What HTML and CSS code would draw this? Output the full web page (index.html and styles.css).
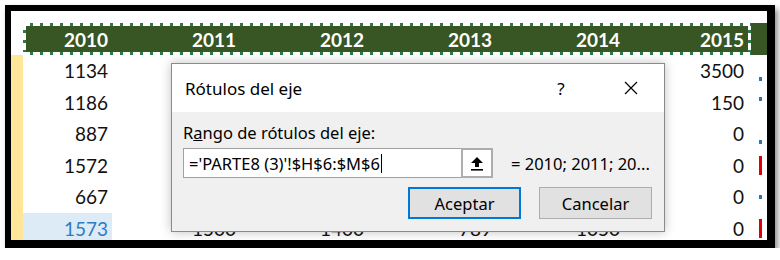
FILE: index.html
```html
<!DOCTYPE html>
<html>

<head>
    <meta charset="utf-8">
    <title>Rótulos del eje</title>
    <link rel="stylesheet" href="styles.css">
</head>

<body>
    <div class="frame">
        <div class="sheet">
            <div class="gap"></div>
            <div class="row head">
                <div class="strip"></div>
                <div class="selection">
                    <div class="cell c1">2010</div>
                    <div class="cell">2011</div>
                    <div class="cell">2012</div>
                    <div class="cell">2013</div>
                    <div class="cell">2014</div>
                    <div class="cell c6">2015</div>
                </div>
                <div class="edge"></div>
            </div>
            <div class="row">
                <div class="strip"></div>
                <div class="cell c1">1134</div>
                <div class="cell"></div>
                <div class="cell"></div>
                <div class="cell"></div>
                <div class="cell"></div>
                <div class="cell c6">3500</div>
                <div class="edge low"><span class="mark blue"></span></div>
            </div>
            <div class="row">
                <div class="strip"></div>
                <div class="cell c1">1186</div>
                <div class="cell"></div>
                <div class="cell"></div>
                <div class="cell"></div>
                <div class="cell"></div>
                <div class="cell c6">150</div>
                <div class="edge high"><span class="mark blue"></span></div>
            </div>
            <div class="row">
                <div class="strip"></div>
                <div class="cell c1">887</div>
                <div class="cell"></div>
                <div class="cell"></div>
                <div class="cell"></div>
                <div class="cell"></div>
                <div class="cell c6">0</div>
                <div class="edge low"><span class="mark blue"></span></div>
            </div>
            <div class="row">
                <div class="strip"></div>
                <div class="cell c1">1572</div>
                <div class="cell"></div>
                <div class="cell"></div>
                <div class="cell"></div>
                <div class="cell"></div>
                <div class="cell c6">0</div>
                <div class="edge"><span class="mark red"></span></div>
            </div>
            <div class="row">
                <div class="strip"></div>
                <div class="cell c1">667</div>
                <div class="cell"></div>
                <div class="cell"></div>
                <div class="cell"></div>
                <div class="cell"></div>
                <div class="cell c6">0</div>
                <div class="edge"><span class="mark blue"></span></div>
            </div>
            <div class="row">
                <div class="strip"></div>
                <div class="cell c1 active">1573</div>
                <div class="cell">1500</div>
                <div class="cell">1400</div>
                <div class="cell">789</div>
                <div class="cell">1050</div>
                <div class="cell c6">0</div>
                <div class="edge"><span class="mark red"></span></div>
            </div>
        </div>

        <div class="dialog">
            <div class="titleBar">
                <span class="title">Rótulos del eje</span>
                <span class="help">?</span>
                <svg class="close" width="14" height="14" viewBox="0 0 14 14">
                    <path d="M1 1 L13 13 M13 1 L1 13" stroke="#000" stroke-width="1.2" fill="none" />
                </svg>
            </div>
            <div class="dialogBody">
                <div class="label">R<u>a</u>ngo de rótulos del eje:</div>
                <div class="inputRow">
                    <div class="field">='PARTE8 (3)'!$H$6:$M$6<span class="caret"></span></div>
                    <div class="collapse">
                        <svg width="14" height="15" viewBox="0 0 14 15">
                            <path d="M7 1 L13 7 L9 7 L9 11 L5 11 L5 7 L1 7 Z" fill="#000" />
                            <rect x="1" y="13" width="12" height="1.6" fill="#000" />
                        </svg>
                    </div>
                    <span class="preview">= 2010; 2011; 20...</span>
                </div>
                <div class="buttons">
                    <div class="button default">Aceptar</div>
                    <div class="button">Cancelar</div>
                </div>
            </div>
        </div>
    </div>
</body>

</html>
```

FILE: styles.css
```css
body {
    margin: 0;
    background-color: white;
    font-family: Lato, 'Liberation Sans', sans-serif;
}

.frame {
    position: relative;
    box-sizing: border-box;
    width: 770px;
    height: 243px;
    margin: 5px 0 0 5px;
    border-style: solid;
    border-color: black;
    border-width: 6px 8px 8px 6px;
    box-shadow: 3px 4px 6px rgba(0, 0, 0, 0.45);
    overflow: hidden;
    background-color: white;
}

.gap {
    height: 12px;
}

.row {
    display: flex;
    height: 31.5px;
    font-size: 19px;
    color: #111;
}

.row.head {
    height: 32px;
    color: white;
    font-weight: bold;
}

.strip {
    width: 12px;
    flex-shrink: 0;
    background-color: #ffe699;
}

.head .strip {
    background-color: white;
}

.selection {
    display: flex;
    background:
        repeating-linear-gradient(90deg, #fff 0 7px, #2a7a4a 7px 10px) top left / 100% 3px no-repeat,
        repeating-linear-gradient(90deg, #fff 0 7px, #2a7a4a 7px 10px) bottom left / 100% 3px no-repeat,
        repeating-linear-gradient(180deg, #fff 0 7px, #2a7a4a 7px 10px) top left / 3px 100% no-repeat,
        repeating-linear-gradient(180deg, #fff 0 7px, #2a7a4a 7px 10px) top right / 3px 100% no-repeat,
        #375623;
}

.cell {
    width: 128px;
    flex-shrink: 0;
    box-sizing: border-box;
    padding-right: 4px;
    display: flex;
    align-items: center;
    justify-content: flex-end;
}

.cell.c1 {
    width: 89px;
}

.cell.c6 {
    width: 127px;
    padding-right: 7px;
}

.cell.active {
    background-color: #ddebf7;
    color: #2f7bc4;
}

.edge {
    flex: 1;
    display: flex;
    align-items: center;
    padding-left: 8px;
}

.head .edge {
    background-color: #375623;
}

.edge.low {
    align-items: flex-end;
    padding-bottom: 6px;
}

.edge.high {
    align-items: flex-start;
    padding-top: 10px;
}

.mark {
    width: 3px;
    height: 4px;
}

.mark.blue {
    background-color: #2e75b6;
}

.mark.red {
    height: 19px;
    background-color: #e00000;
}

/* dialog */

.dialog {
    position: absolute;
    left: 160px;
    top: 52px;
    width: 494px;
    height: 169px;
    box-sizing: border-box;
    border: 1px solid #8a8a8a;
    background-color: #f0f0f0;
    box-shadow: 0 0 10px rgba(0, 0, 0, 0.25);
    font-family: 'Noto Sans', 'Open Sans', sans-serif;
    color: black;
}

.titleBar {
    display: flex;
    align-items: center;
    height: 48px;
    padding-left: 13px;
    background-color: white;
    font-size: 17px;
}

.title {
    flex: 1;
}

.help {
    width: 14px;
    text-align: center;
}

.close {
    margin-left: 56px;
    margin-right: 26px;
}

.dialogBody {
    padding: 11px 12px 0 11px;
    font-size: 16.5px;
}

.label {
    height: 20px;
    line-height: 20px;
}

.inputRow {
    display: flex;
    align-items: center;
    margin-top: 5px;
}

.field {
    width: 278px;
    height: 30px;
    box-sizing: border-box;
    border: 1px solid #a0a0a0;
    border-right: none;
    background-color: white;
    padding-left: 5px;
    display: flex;
    align-items: center;
}

.caret {
    width: 1px;
    height: 19px;
    margin-left: 1px;
    background-color: black;
}

.collapse {
    width: 32px;
    height: 30px;
    box-sizing: border-box;
    border: 2px solid #adadad;
    background-color: white;
    display: flex;
    align-items: center;
    justify-content: center;
}

.preview {
    margin-left: 18px;
}

.buttons {
    display: flex;
    justify-content: flex-end;
    gap: 18px;
    margin-top: 9px;
}

.button {
    width: 113px;
    height: 32px;
    box-sizing: border-box;
    border: 1px solid #adadad;
    background-color: #e1e1e1;
    display: flex;
    align-items: center;
    justify-content: center;
}

.button.default {
    border: 2px solid #0078d7;
}
```
